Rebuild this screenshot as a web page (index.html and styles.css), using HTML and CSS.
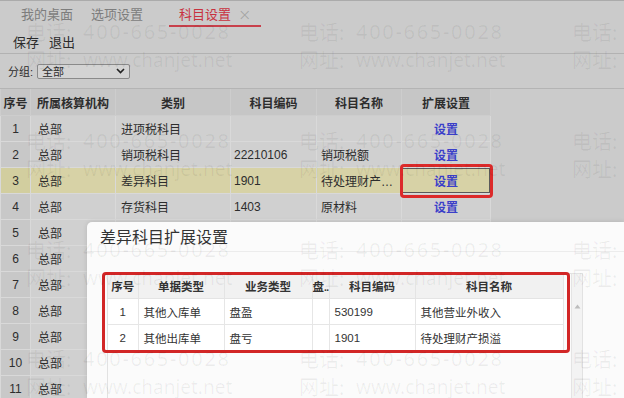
FILE: index.html
```html
<!DOCTYPE html>
<html lang="zh-CN">
<head>
<meta charset="utf-8">
<title>科目设置</title>
<link rel="stylesheet" href="styles.css">
</head>
<body>
<div class="app">
  <div class="tabs">
    <span class="tab tab-first">我的桌面</span>
    <span class="tab tab-second">选项设置</span>
    <span class="tab tab-active">科目设置<span class="tab-close">×</span></span>
  </div>
  <div class="toolbar">
    <span class="tool">保存</span>
    <span class="tool">退出</span>
  </div>
  <div class="filter">
    <span class="filter-label">分组:</span>
    <div class="select">
      <span>全部</span>
      <svg class="chev" width="9" height="6" viewBox="0 0 9 6"><polyline points="1,1 4.5,4.5 8,1" fill="none" stroke="#222" stroke-width="1.6"/></svg>
    </div>
  </div>
  <table class="grid">
    <colgroup><col class="c1"><col class="c2"><col class="c3"><col class="c4"><col class="c5"><col class="c6"></colgroup>
    <thead>
      <tr><th>序号</th><th>所属核算机构</th><th>类别</th><th>科目编码</th><th>科目名称</th><th>扩展设置</th></tr>
    </thead>
    <tbody>
      <tr><td class="num">1</td><td>总部</td><td>进项税科目</td><td></td><td></td><td class="act"><a class="link">设置</a></td></tr>
      <tr><td class="num">2</td><td>总部</td><td>销项税科目</td><td>22210106</td><td>销项税额</td><td class="act"><a class="link">设置</a></td></tr>
      <tr class="sel"><td class="num">3</td><td>总部</td><td>差异科目</td><td>1901</td><td class="ell">待处理财产损溢</td><td class="act act-focus"><a class="link">设置</a></td></tr>
      <tr><td class="num">4</td><td>总部</td><td>存货科目</td><td>1403</td><td>原材料</td><td class="act"><a class="link">设置</a></td></tr>
      <tr><td class="num">5</td><td>总部</td><td></td><td></td><td></td><td class="act"></td></tr>
      <tr><td class="num">6</td><td>总部</td><td></td><td></td><td></td><td class="act"></td></tr>
      <tr><td class="num">7</td><td>总部</td><td></td><td></td><td></td><td class="act"></td></tr>
      <tr><td class="num">8</td><td>总部</td><td></td><td></td><td></td><td class="act"></td></tr>
      <tr><td class="num">9</td><td>总部</td><td></td><td></td><td></td><td class="act"></td></tr>
      <tr><td class="num">10</td><td>总部</td><td></td><td></td><td></td><td class="act"></td></tr>
      <tr><td class="num">11</td><td>总部</td><td></td><td></td><td></td><td class="act"></td></tr>
    </tbody>
  </table>
</div>

<div class="modal">
  <div class="modal-title">差异科目扩展设置</div>
  <div class="modal-body">
    <div class="subgrid">
      <table class="sub">
        <colgroup><col class="s1"><col class="s2"><col class="s3"><col class="s4"><col class="s5"><col class="s6"></colgroup>
        <thead>
          <tr><th>序号</th><th>单据类型</th><th>业务类型</th><th class="narrow">盘<span class="dots">..</span></th><th>科目编码</th><th>科目名称</th></tr>
        </thead>
        <tbody>
          <tr><td class="num">1</td><td>其他入库单</td><td>盘盈</td><td></td><td>530199</td><td>其他营业外收入</td></tr>
          <tr><td class="num">2</td><td>其他出库单</td><td>盘亏</td><td></td><td>1901</td><td>待处理财产损溢</td></tr>
        </tbody>
      </table>
      <div class="scrollbar">
        <svg class="arrow" width="7" height="5" viewBox="0 0 7 5"><polygon points="3.5,0.5 6.5,4.5 0.5,4.5" fill="#bdbdbd"/></svg>
      </div>
    </div>
  </div>
</div>

<div class="mark mark-cell"></div>
<div class="mark mark-grid"></div>

<div class="watermark">
  <div class="wm"><div><span class="wm-l">电话:</span><span class="wm-tel">400-665-0028</span></div><div><span class="wm-l">网址:</span><span class="wm-url">www.chanjet.net</span></div></div>
  <div class="wm"><div><span class="wm-l">电话:</span><span class="wm-tel">400-665-0028</span></div><div><span class="wm-l">网址:</span><span class="wm-url">www.chanjet.net</span></div></div>
  <div class="wm"><div><span class="wm-l">电话:</span></div><div><span class="wm-l">网址:</span></div></div>
  <div class="wm"><div><span class="wm-l">电话:</span><span class="wm-tel">400-665-0028</span></div><div><span class="wm-l">网址:</span><span class="wm-url">www.chanjet.net</span></div></div>
  <div class="wm"><div><span class="wm-l">电话:</span><span class="wm-tel">400-665-0028</span></div><div><span class="wm-l">网址:</span><span class="wm-url">www.chanjet.net</span></div></div>
  <div class="wm"><div><span class="wm-l">电话:</span></div><div><span class="wm-l">网址:</span></div></div>
  <div class="wm"><div><span class="wm-l">电话:</span><span class="wm-tel">400-665-0028</span></div><div><span class="wm-l">网址:</span><span class="wm-url">www.chanjet.net</span></div></div>
  <div class="wm"><div><span class="wm-l">电话:</span><span class="wm-tel">400-665-0028</span></div><div><span class="wm-l">网址:</span><span class="wm-url">www.chanjet.net</span></div></div>
  <div class="wm"><div><span class="wm-l">电话:</span></div><div><span class="wm-l">网址:</span></div></div>
  <div class="wm"><div><span class="wm-l">电话:</span><span class="wm-tel">400-665-0028</span></div><div><span class="wm-l">网址:</span><span class="wm-url">www.chanjet.net</span></div></div>
  <div class="wm"><div><span class="wm-l">电话:</span><span class="wm-tel">400-665-0028</span></div><div><span class="wm-l">网址:</span><span class="wm-url">www.chanjet.net</span></div></div>
  <div class="wm"><div><span class="wm-l">电话:</span></div><div><span class="wm-l">网址:</span></div></div>
</div>
</body>
</html>
```
FILE: styles.css
```css
html, body {
  margin: 0;
  padding: 0;
}
body {
  width: 624px;
  height: 398px;
  overflow: hidden;
  position: relative;
  background: #cbcbcb;
  font-family: "Liberation Sans", "Noto Sans CJK SC", sans-serif;
  color: #2d2d2d;
}

/* tabs */
.tabs {
  height: 30px;
  box-sizing: border-box;
  border-top: 1px solid #ababab;
  display: flex;
  align-items: flex-start;
  font-size: 13px;
}
.tab {
  padding-top: 4px;
  line-height: 20px;
  height: 20px;
  color: #7d7d7d;
}
.tab-first { margin-left: 21px; }
.tab-second { margin-left: 18px; }
.tab-active {
  margin-left: 26px;
  padding-left: 10px;
  padding-right: 10px;
  color: #c8323f;
  border-bottom: 2px solid #c8404b;
  display: flex;
}
.tab-close {
  margin-left: 7px;
  color: #a2a2a2;
  font-size: 16px;
  font-weight: 300;
  font-family: "DejaVu Sans", sans-serif;
}

/* toolbar */
.toolbar {
  height: 24px;
  box-sizing: border-box;
  border-bottom: 1px solid #b2b2b2;
  display: flex;
  align-items: center;
  padding-left: 13px;
  gap: 10px;
  font-size: 13px;
  color: #2b2b2b;
}

/* filter */
.filter {
  height: 35px;
  display: flex;
  align-items: center;
  padding-left: 8px;
  font-size: 11px;
  border-bottom: 1px solid #b4b4b4;
  box-sizing: border-box;
}
.filter-label { color: #2b2b2b; }
.select {
  margin-left: 4px;
  width: 93px;
  height: 15px;
  box-sizing: border-box;
  border: 1px solid #8a8a8a;
  border-radius: 2px;
  background: #d3d3d3;
  display: flex;
  align-items: center;
  justify-content: space-between;
  padding: 0 4px 0 4px;
  font-size: 11px;
}

/* main grid */
.grid {
  border-collapse: collapse;
  table-layout: fixed;
  width: 490px;
  font-size: 12px;
}
.c1 { width: 30px; }
.c2 { width: 85px; }
.c3 { width: 115px; }
.c4 { width: 86px; }
.c5 { width: 85px; }
.c6 { width: 89px; }
.grid th {
  height: 26px;
  padding: 0;
  background: #c6c6c6;
  font-weight: bold;
  color: #2d2d2d;
  border: 1px solid #cdcdcd;
  border-top: none;
}
.grid td {
  height: 25px;
  padding: 0 4px;
  background: #d0d0d0;
  border: 1px solid #d9d9d9;
  white-space: nowrap;
  overflow: hidden;
}
.grid td:nth-child(2) { padding-left: 7px; }
.grid td:nth-child(3) { padding-left: 5px; }
.grid td:nth-child(4) { padding-left: 3px; }
.grid td.num {
  text-align: center;
  background: #c8c8c8;
  padding: 0;
}
.grid td.act { text-align: center; }
.grid td.ell { text-overflow: ellipsis; }
.grid tr.sel td { background: #d7d2a6; }
.grid tr.sel td.num { background: #d2ce9f; }
.grid td.act-focus { box-shadow: inset 0 0 0 1px #5a5a5a; }
.link {
  color: #3b3fc9;
  font-weight: bold;
  font-size: 12px;
}

/* modal */
.modal {
  position: absolute;
  left: 87px;
  top: 222px;
  right: 0;
  bottom: 0;
  background: #fbfbfb;
  border-radius: 5px 0 0 0;
  box-shadow: 0 0 5px rgba(0, 0, 0, 0.12);
  z-index: 2;
  overflow: hidden;
}
.modal-title {
  height: 30px;
  box-sizing: border-box;
  padding: 6px 0 0 13px;
  font-size: 16px;
  line-height: 20px;
  color: #333;
  border-bottom: 1px solid #ececec;
}
.modal-body {
  padding: 21px 0 0 20px;
}
.subgrid {
  width: 476px;
  height: 160px;
  box-sizing: border-box;
  border: 1px solid #e2e2e2;
  border-bottom: none;
  display: flex;
  align-items: flex-start;
}
.sub {
  border-collapse: collapse;
  table-layout: fixed;
  width: 455px;
  font-size: 11.5px;
  color: #333;
}
.s1 { width: 30px; }
.s2 { width: 86px; }
.s3 { width: 88px; }
.s4 { width: 17px; }
.s5 { width: 86px; }
.s6 { width: 148px; }
.sub th {
  height: 24px;
  padding: 0;
  background: #f1f1f1;
  font-weight: bold;
  border: 1px solid #e4e4e4;
  border-top: none;
  white-space: nowrap;
  overflow: hidden;
}
.sub th:first-child { border-left: none; }
.sub th.narrow {
  text-align: left;
  padding-left: 0;
  overflow: visible;
}
.dots {
  font-size: 10px;
  letter-spacing: -0.5px;
}
.sub td {
  height: 25px;
  padding: 0 5px;
  background: #ffffff;
  border: 1px solid #e6e6e6;
  white-space: nowrap;
  overflow: hidden;
}
.sub td:first-child { border-left: none; }
.sub td.num { text-align: center; padding: 0; }
.scrollbar {
  margin-left: auto;
  width: 11px;
  height: 100%;
  box-sizing: border-box;
  border-left: 1px solid #e4e4e4;
  background: #f3f3f3;
  display: flex;
  justify-content: center;
  padding-top: 30px;
}
.arrow { display: block; }

/* annotations */
.mark {
  position: absolute;
  border: 3px solid #dc2a2a;
  border-radius: 4px;
  box-sizing: border-box;
  z-index: 3;
}
.mark-cell {
  left: 400px;
  top: 164px;
  width: 93px;
  height: 34px;
}
.mark-grid {
  left: 102px;
  top: 272px;
  width: 468px;
  height: 81px;
  border-color: #d22626;
}

/* watermark */
.watermark {
  position: absolute;
  left: 26px;
  top: 18px;
  right: 0;
  bottom: 0;
  overflow: hidden;
  display: grid;
  grid-template-columns: 273px 273px 52px;
  grid-auto-rows: 109px;
  z-index: 5;
  pointer-events: none;
  color: rgba(0, 0, 0, 0.06);
  white-space: nowrap;
}
.wm div {
  height: 28px;
  line-height: 28px;
  display: flex;
  align-items: center;
}
.wm-l {
  display: inline-block;
  width: 57px;
  font-family: "Noto Sans CJK SC", sans-serif;
  font-size: 20px;
}
.wm-tel {
  font-family: "Noto Sans", sans-serif;
  font-size: 20px;
  letter-spacing: 1.7px;
}
.wm-url {
  font-family: "Noto Sans", sans-serif;
  font-size: 19px;
}
```
